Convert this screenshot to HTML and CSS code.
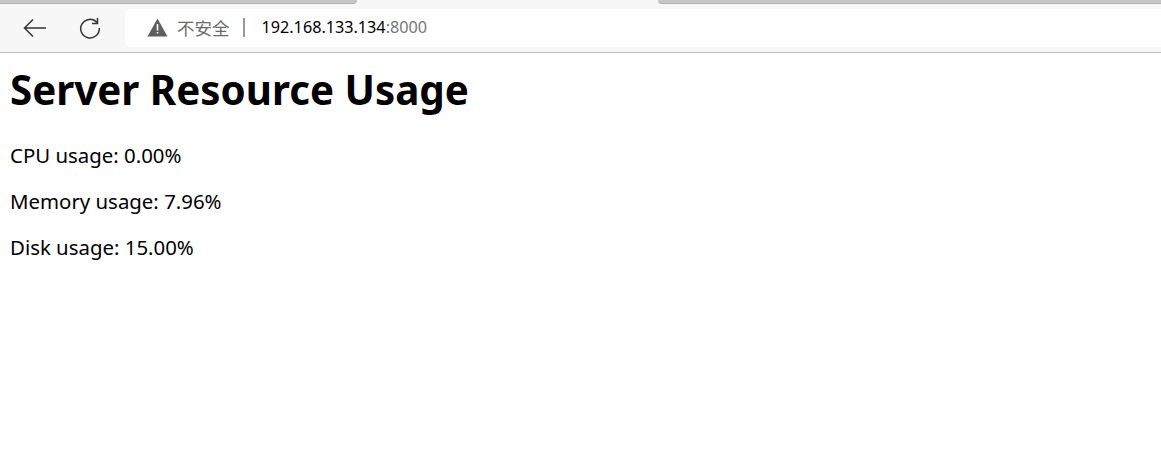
FILE: index.html
```html
<!DOCTYPE html>
<html lang="zh">
<head>
    <meta charset="UTF-8">
    <title>Server Resource Usage</title>
    <meta name="viewport" content="width=device-width, initial-scale=1.0">
    <link rel="stylesheet" href="styles.css">
</head>
<body>
    <div class="tabs">
        <div class="tab tab-left"></div>
        <div class="tab-active"></div>
        <div class="tab tab-right"></div>
    </div>
    <div class="toolbar">
        <button class="nav-btn">
            <svg width="26" height="24" viewBox="0 0 26 24"><path d="M2 12H24M11 3.500L2.500 12L11 20.500" fill="none" stroke="#333" stroke-width="1.500"/></svg>
        </button>
        <button class="nav-btn">
            <svg width="24" height="24" viewBox="0 0 24 24"><path d="M19 6.500A9.300 9.300 0 1 0 21.300 12" fill="none" stroke="#333" stroke-width="1.500"/><path d="M19.500 2V7.500H14" fill="none" stroke="#333" stroke-width="1.500"/></svg>
        </button>
        <div class="address">
            <svg class="warn" width="21" height="19" viewBox="0 0 21 19"><path d="M10.500 0.500L20.500 18.500H0.500Z" fill="#5f5f5f"/><path d="M9.700 6H11.300V12.500H9.700ZM9.700 14H11.300V15.600H9.700Z" fill="#fff"/></svg>
            <span class="insecure">不安全</span>
            <span class="divider"></span>
            <span class="host">192.168.133.134</span><span class="port">:8000</span>
        </div>
    </div>
    <div class="content">
        <h1>Server Resource Usage</h1>
        <p>CPU usage: 0.00%</p>
        <p>Memory usage: 7.96%</p>
        <p>Disk usage: 15.00%</p>
    </div>
</body>
</html>
```

FILE: styles.css
```css
html, body {
    margin: 0;
    background: #fff;
    overflow: hidden;
}
body {
    font-family: "Noto Sans", "Noto Sans CJK SC", sans-serif;
    color: #000;
}
.tabs {
    display: flex;
    height: 4px;
    background: #f7f7f7;
}
.tab {
    height: 4px;
    background: #c6c6c6;
    border-bottom: 1px solid #b0b0b0;
    box-sizing: border-box;
}
.tab-left {
    width: 357px;
    border-bottom-right-radius: 6px;
}
.tab-active {
    width: 301px;
}
.tab-right {
    flex: 1;
    border-bottom-left-radius: 6px;
}
.toolbar {
    display: flex;
    align-items: center;
    height: 48px;
    padding-left: 17px;
    background: #f7f7f7;
    border-bottom: 1px solid #bdbdbd;
}
.nav-btn {
    display: flex;
    align-items: center;
    justify-content: center;
    width: 36px;
    height: 36px;
    padding: 0;
    margin-right: 19px;
    background: none;
    border: none;
}
.address {
    display: flex;
    flex: 1;
    align-items: center;
    box-sizing: border-box;
    height: 38px;
    margin-left: -2px;
    margin-right: -6px;
    padding-left: 22px;
    padding-bottom: 2px;
    background: #fff;
    border-radius: 6px;
    font-size: 16.2px;
}
.warn {
    flex-shrink: 0;
}
.insecure {
    margin-left: 9px;
    color: #6b6b6b;
    font-size: 17.5px;
}
.divider {
    width: 2px;
    height: 19px;
    margin: 0 17px 0 13px;
    background: #9a9a9a;
}
.host {
    color: #000;
}
.port {
    color: #767676;
}
.content {
    padding: 0 10px;
}
h1 {
    margin: 11px 0 26px;
    font-size: 40.3px;
    line-height: 52px;
    font-weight: 700;
}
p {
    margin: 0 0 19.5px;
    font-size: 20.4px;
    line-height: 26.5px;
}
```
